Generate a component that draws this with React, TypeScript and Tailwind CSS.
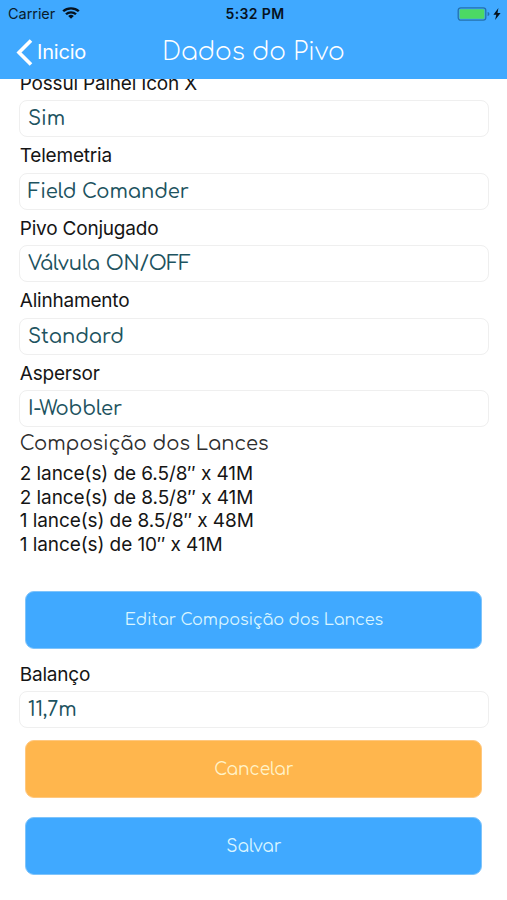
import clsx from "clsx";

interface FieldProps {
  label: string;
  value: string;
}

const rounded = "font-['Comfortaa','Inter',sans-serif] [font-feature-settings:'cv11']";

const fields: FieldProps[] = [
  { label: "Possui Painel Icon X", value: "Sim" },
  { label: "Telemetria", value: "Field Comander" },
  { label: "Pivo Conjugado", value: "Válvula ON/OFF" },
  { label: "Alinhamento", value: "Standard" },
  { label: "Aspersor", value: "I-Wobbler" },
];

const spans = [
  "2 lance(s) de 6.5/8″ x 41M",
  "2 lance(s) de 8.5/8″ x 41M",
  "1 lance(s) de 8.5/8″ x 48M",
  "1 lance(s) de 10″ x 41M",
];

function StatusBar() {
  return (
    <div className="grid grid-cols-3 items-center h-7 pl-2 pr-1.5 text-[#0a1c2c]">
      <div className="flex items-center gap-[7px]">
        <span className="text-[14.5px] tracking-[-0.05px]">Carrier</span>
        <svg width="18" height="12" viewBox="0 0 18 13" preserveAspectRatio="none" fill="none" stroke="#06121e" strokeWidth="2.4" className="-mt-0.5">
          <path d="M1.2 4.7a11 11 0 0 1 15.6 0" />
          <path d="M4 7.8a7.1 7.1 0 0 1 10 0" />
          <path d="M9 12.6 6.2 9.8a4 4 0 0 1 5.6 0Z" fill="#06121e" stroke="none" />
        </svg>
      </div>
      <span className="-mt-0.5 ml-px text-center text-[14px] font-semibold tracking-[0.35px] text-[#06121e]">5:32 PM</span>
      <div className="flex items-center justify-end gap-[3px] -mt-px">
        <svg width="33" height="14" viewBox="0 0 33 14">
          <rect x="1.2" y="0.8" width="27.6" height="12.4" rx="2.6" fill="none" stroke="#2471ad" strokeWidth="1.3" />
          <rect x="2.6" y="2.2" width="24.8" height="9.6" rx="1.2" fill="#4cd964" />
          <path d="M30.6 5v4c1.4-.4 1.8-1.1 1.8-2s-.4-1.6-1.8-2Z" fill="#2471ad" />
        </svg>
        <svg width="8" height="12" viewBox="0 0 8 12" fill="#06121e">
          <path d="M5.4 0 0.4 6.7h2.9L2.1 12l5.5-7.1H4.5Z" />
        </svg>
      </div>
    </div>
  );
}

function Field({ label, value }: FieldProps) {
  return (
    <div>
      <div className="h-[35.5px] pl-[0.75px] text-[19px] leading-[37.5px] tracking-[-0.2px] text-[#151515]">{label}</div>
      <div
        className={clsx(
          rounded,
          "h-[37px] rounded-lg border border-[#efefef] pl-2 text-[19.5px] leading-[36px] font-medium tracking-[-0.05px] text-[#1d5360]"
        )}
      >
        {value}
      </div>
    </div>
  );
}

function Button({ children, className }: { children: string; className: string }) {
  return (
    <button
      className={clsx(rounded, "block w-[457px] h-[58px] ml-[6.4px] rounded-[9px] border", className)}
    >
      {children}
    </button>
  );
}

export default function App() {
  return (
    <div className="flex flex-col h-[900px] overflow-hidden bg-white font-['Inter',sans-serif]">
      <header className="relative z-10 h-[79px] shrink-0 bg-[#40a9ff]">
        <StatusBar />
        <div className="grid grid-cols-[1fr_auto_1fr] items-center h-12 pl-4 text-white">
          <div className="flex items-center gap-1">
            <svg width="17" height="27" viewBox="0 0 17 27" fill="none" stroke="white" strokeWidth="3.6">
              <path d="M15 1.5 3 13.5l12 12" />
            </svg>
            <span className="text-[20px] tracking-[-0.2px]">Inicio</span>
          </div>
          <h1 className={clsx(rounded, "mr-4 text-[24.5px] font-light")}>Dados do Pivo</h1>
        </div>
      </header>

      <main className="flex-1 pl-[19px] pr-[18px]">
        <div className="-mt-[14.5px]">
          {fields.map((f) => (
            <Field key={f.label} {...f} />
          ))}
        </div>

        <h2 className={clsx(rounded, "h-[35px] pl-[0.75px] text-[19.5px] leading-[35px] text-[#2e2e2e]")}>
          Composição dos Lances
        </h2>
        <ul className="h-[129px] pt-[0.4px] pl-[0.75px] text-[19px] leading-[23.4px] tracking-[-0.08px] text-[#151515]">
          {spans.map((s) => (
            <li key={s}>{s}</li>
          ))}
        </ul>

        <Button className="border-[#7fc4fb] bg-[#40a9ff] text-[16px] tracking-[-0.08px] text-[#d9f5ff]">
          Editar Composição dos Lances
        </Button>
        <div className="mt-[6.5px]">
          <Field label="Balanço" value="11,7m" />
        </div>
        <Button className="mt-3 border-[#ffc87f] bg-[#ffb64d] pt-0.5 text-[17px] text-[#fff3c9]">Cancelar</Button>
        <Button className="mt-[19px] border-[#7fc4fb] bg-[#40a9ff] pt-0.5 text-[17px] text-[#d9f5ff]">Salvar</Button>
      </main>
    </div>
  );
}
